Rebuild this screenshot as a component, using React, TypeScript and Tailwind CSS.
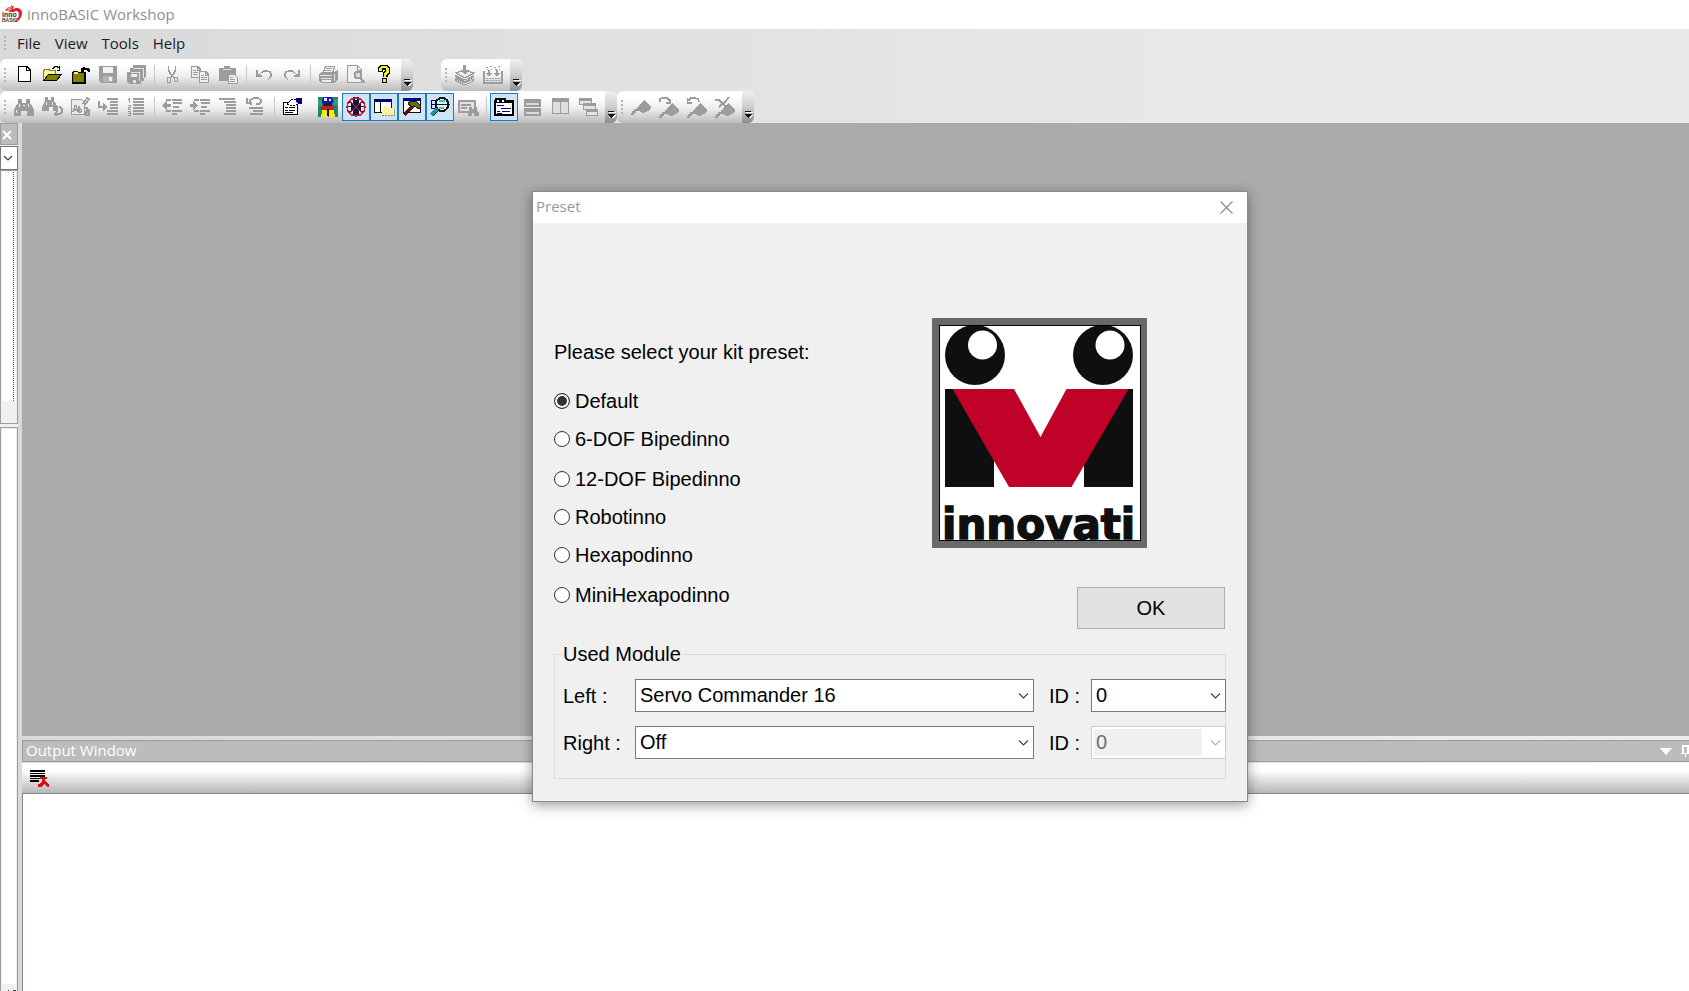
import { useState } from "react";
import type { ReactNode } from "react";

const G = "#9c9c9c";

function Icon({ children }: { children: ReactNode }) {
  return (
    <svg width="22" height="22" viewBox="0 0 22 22" fill="none" shapeRendering="crispEdges" aria-hidden="true">
      {children}
    </svg>
  );
}

const lines = (rows: [number, number, number][], color = G) =>
  rows.map(([x, y, w], i) => <rect key={i} x={x} y={y} width={w} height="2" fill={color} />);

const Flag = (
  <g fill={G}>
    <path d="M10 8l3-3 2-2v2l3 3 2 1 1 2v2l-3 2-2 1-3 1-3-1-2-2z" />
    <path d="M1 18h2v-2h2v-2h3v-2h3" stroke={G} strokeWidth="2" fill="none" />
  </g>
);

const icons: Record<string, ReactNode> = {
  new: (
    <>
      <path d="M5.500 2.500h8.500l3.500 3.500v11.500h-12z" fill="#fff" stroke="#000" />
      <path d="M13.500 2.500v4h4" stroke="#000" />
    </>
  ),
  open: (
    <>
      <path d="M2.500 17V6.500h1v-1h5v1h6v4" fill="#fbf7a0" stroke="#8a8000" />
      <path d="M2.500 16.500l5-6h13l-5 6z" fill="#808000" stroke="#000" />
      <path d="M11 4.500h1v-1h1v-1h3v1h2v2M18.500 2v4h-3" stroke="#000" />
    </>
  ),
  close: (
    <>
      <path d="M3 8h1V7h5v1h8v12H3z" fill="#000" />
      <rect x="4" y="9" width="11" height="9" fill="#808000" />
      <rect x="5" y="8" width="4" height="2" fill="#f5f080" />
      <path d="M20 8V6h-1V5h-5v1h-2M15 3v2h-2v2h2" stroke="#000" strokeWidth="1.400" />
    </>
  ),
  save: (
    <>
      <path d="M2 2h18v17H4l-2-2z" fill={G} />
      <rect x="6" y="3" width="10" height="6" fill="#f4f4f4" />
      <rect x="6" y="12" width="10" height="6" fill="#b4b4b4" />
      <rect x="12" y="13" width="3" height="4" fill="#eee" />
    </>
  ),
  saveall: (
    <>
      <path d="M8 1h13v12l-2 1v3h-3v3H4l-2-2V8h3V4h3z" fill={G} />
      <path d="M9 4.500h9v9M6 8.500h8v8" stroke="#e4e4e4" />
      <rect x="6" y="10" width="6" height="3" fill="#eee" />
      <rect x="8" y="16" width="3" height="3" fill="#e0e0e0" />
    </>
  ),
  cut: (
    <>
      <path d="M7.500 2v4l1 2 1 2 1 1 3 3M14.500 2v4l-1 2-1 2-1 1-2 3" stroke={G} strokeWidth="1.400" />
      <rect x="6.500" y="13.500" width="3" height="5" rx="1" stroke={G} strokeWidth="1.400" />
      <rect x="13.500" y="13.500" width="3" height="4" rx="1" stroke={G} strokeWidth="1.400" />
    </>
  ),
  copy: (
    <>
      <path d="M2.500 2.500h6l3 3v8h-9z" fill="#f0f0f0" stroke={G} strokeWidth="1.500" />
      <path d="M10.500 7.500h6l3 3v8h-9z" fill="#f0f0f0" stroke={G} strokeWidth="1.500" />
      <path d="M8.500 3v3h3M16.500 8v3h3M4 6.500h3M4 8.500h5M4 10.500h5M12 11.500h3M12 13.500h6M12 15.500h6" stroke={G} />
    </>
  ),
  paste: (
    <>
      <path d="M2 4h5V2h6v2h6v13H2z" fill={G} />
      <path d="M6 5.500h8" stroke="#ddd" />
      <path d="M11.500 10.500h6l3 3v6h-9z" fill="#eee" stroke={G} />
      <path d="M13 13.500h3M13 15.500h5M13 17.500h5" stroke={G} />
    </>
  ),
  undo: (
    <>
      <path d="M7 10l2-2 2-1h3l3 1 1 2v2l-1 2-2 2" stroke={G} strokeWidth="1.400" />
      <path d="M3 6h2v4h2v1h2v2H3z" fill={G} />
    </>
  ),
  redo: (
    <>
      <path d="M15 10l-2-2-2-1H8L5 8l-1 2v2l1 2 2 2" stroke={G} strokeWidth="1.400" />
      <path d="M19 6h-2v4h-2v1h-2v2h6z" fill={G} />
    </>
  ),
  print: (
    <>
      <path d="M6.500 8l2-5.500h9L16 8" fill="#f2f2f2" stroke={G} strokeWidth="1.300" />
      <path d="M9 4.500h6M8 6.500h6" stroke={G} />
      <path d="M2 10l3-2h12l4-2v9l-3 4H4l-2-2z" fill={G} />
      <path d="M3 11.500h12M4 14.500h11M17.500 10v7" stroke="#e4e4e4" />
      <rect x="5" y="16" width="9" height="2" fill="#eee" />
    </>
  ),
  preview: (
    <>
      <path d="M2.500 1.500h10l4 4v13h-14z" fill="#f0f0f0" stroke={G} strokeWidth="1.300" />
      <path d="M12.500 2v4h4" stroke={G} />
      <circle cx="13" cy="11" r="3.500" fill="#ddd" stroke={G} strokeWidth="2" />
      <path d="M15 14l5 5" stroke={G} strokeWidth="2.500" />
    </>
  ),
  help: (
    <>
      <path d="M7.500 7.500V4.500L9 3h4l1.500 1.500V8L12 10.500V13" stroke="#000" strokeWidth="5" />
      <rect x="9" y="14" width="5" height="5" fill="#000" />
      <path d="M7.500 7V4.500L9 3h4l1.500 1.500V8L12 10.500V12.500" stroke="#f6ee1c" strokeWidth="2.800" />
      <rect x="10" y="15" width="3" height="3" fill="#f6ee1c" />
    </>
  ),
  layers: (
    <>
      <path d="M2 17v-2l9 4 8-4v2l-8 4z" fill="#e6e6e6" stroke={G} strokeWidth="1.300" />
      <path d="M2 13v-1l9 4 8-4v1l-8 5z" fill="#e6e6e6" stroke={G} strokeWidth="1.300" />
      <path d="M2 9l8-3 10 3-9 5z" fill="#ececec" stroke={G} strokeWidth="1.300" />
      <path d="M9 1h3v5h3l-4 5-4-5h2z" fill={G} />
    </>
  ),
  build: (
    <>
      <path d="M2 7v12h18V7" stroke={G} strokeWidth="2" />
      <path d="M4 3.500h2M8 2.500h2M12 3.500h2M16 2.500h2M5 5.500h1M9 5.500h1M13 5.500h2M17 5.500h1" stroke={G} />
      <path d="M4 9h6l-3 4zM12 9h6l-3 4zM6 6h2v4H6zM14 6h2v4h-2z" fill={G} />
      <path d="M4 14.500h14M4 16.500h14" stroke={G} strokeDasharray="2 1" />
    </>
  ),
  find: (
    <>
      <path d="M5 3h4v4h4V3h4v4l2 3 2 4v6h-7v-5h-6v5H1v-6l2-4 2-3z" fill={G} />
      <path d="M6.500 8v3M15.500 8v3M3.500 14v3M12 9.500h-2" stroke="#ececec" />
    </>
  ),
  findnext: (
    <>
      <path d="M4 1h3v3h3V1h3v4l2 3 2 3v4h-5v-4H8v4H1v-4l2-4 1-2z" fill={G} />
      <path d="M5.500 6v3M11.500 6v3" stroke="#ececec" />
      <path d="M18 11h1l2 2v3l-2 2h-5M16 15l-2 3 2 2" stroke={G} strokeWidth="1.500" />
    </>
  ),
  replace: (
    <>
      <path d="M2.500 3.500h10l3 3v12h-13z" fill="#ececec" stroke={G} strokeWidth="1.300" />
      <path d="M4 16l2-6h1l2 6M5 14h3M10 10v6h2l1-2-1-1h-2" stroke={G} strokeWidth="1.300" />
      <path d="M14 8l4-6 2 1-4 6M15 12h3v2h3M17 16h3v3h-3z" stroke={G} strokeWidth="1.600" />
    </>
  ),
  goto: (
    <>
      {lines([[10, 2, 11], [13, 5, 8], [13, 8, 8], [13, 11, 8], [10, 14, 11], [10, 17, 11]])}
      <path d="M2 5v6h5" stroke={G} strokeWidth="1.500" />
      <path d="M6 7l5 4-5 4z" fill={G} />
    </>
  ),
  numbered: (
    <>
      {lines([[8, 2, 11], [8, 5, 11], [8, 8, 11], [8, 11, 11], [8, 14, 11], [8, 17, 11]])}
      <path d="M4.500 2v5M3 3.500h2M3 9.500h2v2h-2v2h3M3 15.500h2v4h-2M3 17.500h2" stroke={G} />
    </>
  ),
  outdent: (
    <>
      {lines([[5, 3, 5], [11, 3, 10], [12, 6, 9], [12, 10, 6], [5, 14, 5], [11, 14, 10], [11, 17, 5]])}
      <path d="M1 9.500L6 5v3h4v3H6v3z" fill={G} />
    </>
  ),
  indent: (
    <>
      {lines([[5, 3, 5], [11, 3, 10], [12, 6, 9], [12, 10, 6], [5, 14, 5], [11, 14, 10], [11, 17, 5]])}
      <path d="M9 9.500L4 5v3H1v3h3v3z" fill={G} />
    </>
  ),
  comment: (
    <>
      {lines([[2, 2, 16], [7, 5, 12], [9, 8, 10], [9, 11, 10], [9, 14, 10], [7, 17, 12]])}
    </>
  ),
  uncomment: (
    <>
      {lines([[4, 11, 14], [8, 14, 10], [5, 17, 13]])}
      <path d="M7 9L5 7V4l2-1 2-1h4l3 2v2l-2 2h-3M2 2v5h5" stroke={G} strokeWidth="1.500" />
    </>
  ),
  props: (
    <>
      <path d="M2.500 6.500h14v12h-14z" fill="#fff" stroke="#000" strokeWidth="1.600" />
      <path d="M4 11.500h3M8 11.500h6M4 14.500h3M8 14.500h6M4 16.500h8" stroke="#000" />
      <path d="M6 8l4-4 3-1h4v5l-5 2z" fill="#fff" stroke="#000" strokeDasharray="2 1" />
      <path d="M15 2h6v6h-4l-2-2z" fill="#00007c" />
    </>
  ),
  person: (
    <>
      <rect x="1" y="1" width="20" height="20" fill="#1f8468" />
      <path d="M1 4h4v6H1zM17 3h4v6h-4z" fill="#35a06c" />
      <path d="M6 1h9v2h1v4H5V3h1z" fill="#1717c8" />
      <path d="M7 2h3v3H7zM12 3h2v2h-2z" fill="#e9edff" />
      <path d="M6 7h9v3H6z" fill="#3a1420" />
      <path d="M4 10h13v4H4z" fill="#c2212b" />
      <path d="M5 14h5v5h1v2H4v-3h1zM12 14h5v4h1v3h-6z" fill="#f5ec13" />
      <rect x="10" y="13" width="2" height="7" fill="#111" />
    </>
  ),
  bug: (
    <>
      <rect x="3" y="2" width="16" height="18" fill="#e6e3ee" />
      <path d="M8 4h6v3h2v8h-2v4H8v-4H6V7h2z" fill="#16163f" />
      <path d="M3 6.500h4M15 6.500h4M3 10.500h16M3 15.500h4M15 15.500h4M9 1v4M13 1v4" stroke="#16163f" strokeWidth="1.500" />
      <circle cx="11" cy="11" r="9" stroke="#cf1d2c" strokeWidth="1.500" />
      <path d="M5 5l12 12M17 5L5 17" stroke="#cf1d2c" strokeWidth="1.200" />
    </>
  ),
  winfolder: (
    <>
      <path d="M1.500 3.500h17v13h-17z" fill="#fff" stroke="#111" />
      <rect x="2" y="3" width="17" height="3" fill="#00007c" />
      <path d="M7.500 6v10" stroke="#111" />
      <path d="M9 19v-7h2v-2h4v2h6v7z" fill="#f7f3a6" />
      <path d="M9 19.500h12.500v-7" stroke="#8f8c45" strokeDasharray="2 1" />
    </>
  ),
  hammer: (
    <>
      <path d="M2.500 2.500h17v14h-17z" fill="#fff" stroke="#111" strokeWidth="1.500" />
      <rect x="2" y="2" width="18" height="3" fill="#00007c" />
      <path d="M3 19l9-9" stroke="#5c130c" strokeWidth="3.500" />
      <path d="M7 8l2-3h6l5 5-2 3-4-3-3 1z" fill="#6c6c00" stroke="#222" />
    </>
  ),
  magnify: (
    <>
      <path d="M2.500 4v9M2 4.500h5M2 8.500h4M2 12.500h5" stroke="#00007c" strokeWidth="1.500" />
      <circle cx="13" cy="8.500" r="6.500" fill="#e2f7fb" stroke="#111" strokeWidth="2" />
      <path d="M10 4h6v2h-6zM10 11h5v2h-5z" fill="#2bc4d2" />
      <path d="M7 8.500h14" stroke="#111" />
      <path d="M8 13l-6 6" stroke="#149aa8" strokeWidth="3" />
      <path d="M9 15l-5 5" stroke="#111" strokeWidth="1.300" />
    </>
  ),
  findwin: (
    <>
      <path d="M1.500 4.500h16v11h-16z" fill="#e2e2e2" stroke={G} strokeWidth="2" />
      <path d="M1 5h17M4 9h10M4 12h6" stroke={G} strokeWidth="2" />
      <path d="M12 11h3v2h2v-2h3v3l2 3v3h-5v-3h-2v3h-4v-3l1-3z" fill={G} />
    </>
  ),
  tabs: (
    <>
      <path d="M2 5h1V3h4v2h1V3h4v2h8v14H2z" fill="#fff" stroke="#000" strokeWidth="1.600" />
      <path d="M1 6.500h20" stroke="#000" strokeWidth="1.500" />
      <path d="M4 9.500h7M8 12.500h10M4 15.500h3M9 15.500h8M4 17.500h5" stroke="#00007c" />
    </>
  ),
  horiz: (
    <>
      <path d="M3.500 3.500h15v6h-15zM3.500 12.500h15v6h-15z" fill="#d9d9d9" stroke={G} strokeWidth="2" />
      <path d="M3 4.500h16M3 13.500h16" stroke={G} strokeWidth="4" />
    </>
  ),
  vert: (
    <>
      <path d="M3.500 3.500h8v14h-8zM11.500 3.500h8v14h-8z" fill="#dedede" stroke={G} strokeWidth="1.600" />
      <path d="M3 4h17" stroke={G} strokeWidth="4" />
    </>
  ),
  cascade: (
    <>
      <path d="M2.500 2.500h12v6h-12z" fill="#e4e4e4" stroke={G} strokeWidth="1.500" />
      <path d="M2 3.500h13" stroke={G} strokeWidth="3" />
      <path d="M6.500 7.500h12v6h-12z" fill="#e4e4e4" stroke={G} strokeWidth="1.500" />
      <path d="M6 8.500h13" stroke={G} strokeWidth="3" />
      <path d="M9.500 13.500h11v6h-11z" fill="#e4e4e4" stroke={G} strokeWidth="1.500" />
      <path d="M9 14.500h12" stroke={G} strokeWidth="3" />
    </>
  ),
  flag: Flag,
  flagnext: (
    <>
      <g transform="translate(0 3)">{Flag}</g>
      <path d="M2 6V3l2-1h5l2 2 1 3M12.500 3v4H8" stroke={G} strokeWidth="1.500" />
    </>
  ),
  flagprev: (
    <>
      <g transform="translate(0 3)">{Flag}</g>
      <path d="M13 6l-1-3-3-1H5L2 5M1.500 2v5H6" stroke={G} strokeWidth="1.500" />
    </>
  ),
  flagclear: (
    <>
      <g transform="translate(0 3)">{Flag}</g>
      <path d="M1 4h4l3 3 4 4M15 1l-4 5-6 5" stroke={G} strokeWidth="2" />
    </>
  ),
};

type Item = { icon?: string; label?: string; on?: boolean; gap?: "line" | "blank" };
const b = (icon: string, label: string, on = false): Item => ({ icon, label, on });
const line: Item = { gap: "line" };
const blank: Item = { gap: "blank" };

const standard: Item[] = [
  b("new", "New"), b("open", "Open"), b("close", "Close"), b("save", "Save"), b("saveall", "Save All"), line,
  b("cut", "Cut"), b("copy", "Copy"), b("paste", "Paste"), line,
  b("undo", "Undo"), b("redo", "Redo"), line,
  b("print", "Print"), b("preview", "Print Preview"), b("help", "Help Topics"),
];
const buildItems: Item[] = [b("layers", "Compile"), b("build", "Build")];
const editing: Item[] = [
  b("find", "Find"), b("findnext", "Find Next"), b("replace", "Replace"), b("goto", "Go To"), b("numbered", "Line Numbers"), line,
  b("outdent", "Outdent"), b("indent", "Indent"), b("comment", "Comment"), b("uncomment", "Uncomment"), line,
  b("props", "Properties"), blank,
  b("person", "Module"), b("bug", "Debug", true), b("winfolder", "Workspace", true), b("hammer", "Output", true),
  b("magnify", "Find Results", true), b("findwin", "Find Window"), line,
  b("tabs", "Tabbed", true), b("horiz", "Tile Horizontally"), b("vert", "Tile Vertically"), b("cascade", "Cascade"),
];
const bookmarks: Item[] = [
  b("flag", "Toggle Bookmark"), b("flagnext", "Next Bookmark"), b("flagprev", "Previous Bookmark"), b("flagclear", "Clear Bookmarks"),
];

function Grip() {
  return (
    <span className="flex w-2.5 shrink-0 flex-col items-center gap-0.5">
      {[0, 1, 2, 3].map((i) => (
        <span key={i} className="size-0.5 bg-[#b4b4b4]" />
      ))}
    </span>
  );
}

function Toolbar({ items, name }: { items: Item[]; name: string }) {
  return (
    <div role="toolbar" aria-label={name} className="flex h-8 shrink-0 items-stretch overflow-hidden rounded-md bg-linear-to-b from-white from-20% via-[#ededed] via-55% to-[#bcbcbc]">
      <div className="flex items-center pr-[3px]">
        <Grip />
        {items.map((it, i) =>
          it.gap ? (
            <span key={i} className="flex h-5 w-2 justify-center">
              {it.gap === "line" && <span className="w-px bg-[#c6c6c6]" />}
            </span>
          ) : (
            <button
              key={i}
              type="button"
              aria-label={it.label}
              className={it.on ? "grid size-7 place-items-center border border-[#1979ca] bg-[#cfe4f5]" : "grid size-7 place-items-center"}
            >
              <Icon>{icons[it.icon!]}</Icon>
            </button>
          ),
        )}
      </div>
      <button type="button" aria-label={`${name} options`} className="flex w-3 items-end justify-center bg-linear-to-b from-[#f0f0f0] via-[#cfcfcf] to-[#8c8c8c] pb-1">
        <svg width="9" height="9" viewBox="0 0 9 9" shapeRendering="crispEdges" aria-hidden="true">
          <path d="M2 2h7v1H2zM3 5h6L6 9z" fill="#fff" />
          <path d="M1 1h6v1H1zM1 4h7L4.500 8z" fill="#111" />
        </svg>
      </button>
    </div>
  );
}

function AppLogo() {
  return (
    <svg width="21" height="20" viewBox="0 0 21 20" aria-hidden="true">
      <path d="M3 7c1-4 6-5 8-2 4-2 9-1 9 4 0 4-3 8-6 9h-2l2-2c3-1 4-8 1-9-3 0-4 2-5 2S5 5 3 7z" fill="#e0232b" />
      <path d="M10 5L9 1l3 2z" fill="#c4141c" />
      <path d="M5 4c2-1 4 0 5 2l-4 1z" fill="#f58a8a" />
      <rect x="0" y="8" width="13" height="11" fill="#f4f4f4" />
      <text x="0" y="13" fontSize="7" fontWeight="700" fontFamily="Liberation Sans, sans-serif" fill="#333">inno</text>
      <text x="0" y="18" fontSize="5" fontWeight="700" fontFamily="Liberation Sans, sans-serif" fill="#444">BASIC</text>
    </svg>
  );
}

function InnovatiLogo() {
  return (
    <svg width="215" height="230" viewBox="0 0 215 230" role="img" aria-label="innovati">
      <rect width="215" height="230" fill="#696969" />
      <rect x="7.500" y="7.500" width="201" height="215" fill="#fff" stroke="#000" />
      <clipPath id="frame"><rect x="8" y="8" width="200" height="214" /></clipPath>
      <g clipPath="url(#frame)">
        <circle cx="43" cy="37" r="30" fill="#0f0f0f" />
        <circle cx="171" cy="37" r="30" fill="#0f0f0f" />
        <circle cx="50.500" cy="27" r="14.500" fill="#fff" />
        <circle cx="178" cy="27" r="14.500" fill="#fff" />
        <path d="M13 71h49v98H13zM152 71h49v98h-49z" fill="#0f0f0f" />
        <path d="M62 142v27h15zM152 147v22h-12z" fill="#fff" />
        <path d="M20.500 71h61.500l26.500 48L134.500 71H196.500L139.500 169H77z" fill="#c00228" />
        <text x="10" y="221" fontSize="42" fontWeight="700" fontFamily="DejaVu Sans, sans-serif" fill="#0f0f0f" stroke="#0f0f0f" strokeWidth="1.500">innovati</text>
      </g>
    </svg>
  );
}

function Chevron({ faded = false }: { faded?: boolean }) {
  return (
    <svg className="pointer-events-none absolute top-3 right-1" width="11" height="8" viewBox="0 0 11 8" fill="none" aria-hidden="true">
      <path d="M1 1.500l4.500 4.500L10 1.500" stroke={faded ? "#b0b0b0" : "#404040"} strokeWidth="1.100" />
    </svg>
  );
}

const presets = [
  { name: "Default", space: "" },
  { name: "6-DOF Bipedinno", space: "mt-3.5" },
  { name: "12-DOF Bipedinno", space: "mt-4" },
  { name: "Robotinno", space: "mt-3.5" },
  { name: "Hexapodinno", space: "mt-3.5" },
  { name: "MiniHexapodinno", space: "mt-4" },
];

function ModuleRow({ side, value, disabled }: { side: string; value: string; disabled?: boolean }) {
  return (
    <div className="flex items-center">
      <label htmlFor={`${side}-module`} className="w-[72px]">{side} :</label>
      <span className="relative h-[33px] flex-1 border border-[#7a7a7a] bg-white">
        <select id={`${side}-module`} defaultValue={value} className="h-full w-full appearance-none bg-transparent px-1 pb-0.5 outline-none">
          <option>Servo Commander 16</option>
          <option>Off</option>
        </select>
        <Chevron />
      </span>
      <label htmlFor={`${side}-id`} className="w-[57px] pl-[15px]">ID :</label>
      {disabled ? (
        <span className="relative flex h-[33px] w-[135px] border border-[#cccccc] bg-white p-0.5">
          <select id={`${side}-id`} disabled defaultValue="0" className="h-full w-[108px] appearance-none bg-[#f0f0f0] px-0.5 pb-0.5 text-[#6d6d6d] opacity-100">
            <option>0</option>
          </select>
          <Chevron faded />
        </span>
      ) : (
        <span className="relative h-[33px] w-[135px] border border-[#7a7a7a] bg-white">
          <select id={`${side}-id`} defaultValue="0" className="h-full w-full appearance-none bg-transparent px-1 pb-0.5 outline-none">
            <option>0</option>
            <option>1</option>
          </select>
          <Chevron />
        </span>
      )}
    </div>
  );
}

function PresetDialog() {
  const [preset, setPreset] = useState("Default");
  return (
    <section role="dialog" aria-label="Preset" className="absolute top-[191px] left-[532px] w-[716px] border border-[#8a8a8a] bg-[#f0f0f0] shadow-[0_3px_12px_rgba(0,0,0,0.4)]">
      <header className="flex h-[31px] items-center justify-between bg-white pr-3.5 pb-[3px] pl-[3px]">
        <h2 className="font-[Open_Sans,sans-serif] text-[15px] leading-5 text-[#999999]">Preset</h2>
        <button type="button" aria-label="Close" className="pt-0.5">
          <svg width="13" height="13" viewBox="0 0 13 13" aria-hidden="true">
            <path d="M0.500 0.500l12 12M12.500 0.500l-12 12" stroke="#8c8c8c" strokeWidth="1.200" />
          </svg>
        </button>
      </header>
      <form className="px-[21px] pb-[22px] font-[Liberation_Sans,Arial,sans-serif] text-[20px] leading-6 text-black">
        <div className="flex justify-between pt-[95px]">
          <div role="radiogroup" aria-labelledby="preset-title" className="flex flex-col pt-[22px]">
            <p id="preset-title" className="mb-[25px]">Please select your kit preset:</p>
            {presets.map(({ name, space }) => (
              <label key={name} className={`flex items-center gap-[5px] ${space}`}>
                <input
                  type="radio"
                  name="preset"
                  checked={preset === name}
                  onChange={() => setPreset(name)}
                  className="size-4 appearance-none rounded-full border border-[#333333] bg-white checked:bg-[#333333] checked:shadow-[inset_0_0_0_2px_white]"
                />
                {name}
              </label>
            ))}
          </div>
          <div className="flex w-[294px] flex-col pr-px">
            <InnovatiLogo />
            <button type="button" className="mt-[39px] h-[42px] w-[148px] self-end border border-[#adadad] bg-[#e1e1e1]">OK</button>
          </div>
        </div>
        <fieldset className="mt-[13px] border border-[#dcdcdc] pb-[19px] pl-[7px]">
          <legend className="px-px">Used Module</legend>
          <div className="-mr-px flex flex-col gap-3.5 pt-[13px] pl-px">
            <ModuleRow side="Left" value="Servo Commander 16" />
            <ModuleRow side="Right" value="Off" disabled />
          </div>
        </fieldset>
      </form>
    </section>
  );
}

function SidePanel() {
  return (
    <aside className="flex w-[18px] shrink-0 flex-col bg-[#f0f0f0]">
      <div className="flex h-[22px] items-center border border-[#9c9c9c] bg-[#bcbcbc] pt-px pl-px">
        <button type="button" aria-label="Close panel">
          <svg width="10" height="10" viewBox="0 0 10 10" aria-hidden="true">
            <path d="M1 1l8 8M9 1L1 9" stroke="#fff" strokeWidth="2" />
          </svg>
        </button>
      </div>
      <button type="button" aria-label="Choose view" className="mt-px flex h-6 items-center border border-[#777777] bg-white pl-0.5">
        <svg width="10" height="7" viewBox="0 0 10 7" fill="none" aria-hidden="true">
          <path d="M1 1l4 4 4-4" stroke="#404040" strokeWidth="1.200" />
        </svg>
      </button>
      <div className="h-[254px] border border-[#9c9c9c] px-px pt-px">
        <div className="flex h-[229px] justify-end bg-white pr-0.5">
          <span className="w-px bg-[repeating-linear-gradient(to_bottom,#555_0_1px,#fff_1px_2px)]" />
        </div>
      </div>
      <div className="mt-[3px] flex flex-1 flex-col border border-b-0 border-[#9c9c9c] px-px pt-px">
        <div className="flex-1 bg-white" />
        <div className="flex h-[7px] items-end justify-end gap-1">
          <span className="h-px w-px bg-[#444444]" />
          <span className="h-px w-[3px] bg-[#444444]" />
        </div>
      </div>
    </aside>
  );
}

export default function App() {
  return (
    <div className="relative flex h-screen flex-col overflow-hidden bg-[#dadada] font-[Open_Sans,sans-serif]">
      <header className="flex h-[29px] shrink-0 items-center gap-1 bg-white pb-0.5 pl-0.5">
        <AppLogo />
        <h1 className="text-[15px] leading-5 text-[#8f8f8f]">innoBASIC Workshop</h1>
      </header>
      <div className="shrink-0 bg-linear-to-r from-[#d9d9d9] to-[#e8e8e8] to-70%">
        <nav aria-label="Main menu" className="flex h-[30px] items-center pb-[3px] text-[15px] leading-5 text-[#1c1c1c]">
          <Grip />
          <div className="flex gap-3.5 pl-[7px]">
            {["File", "View", "Tools", "Help"].map((m) => (
              <button key={m} type="button">{m}</button>
            ))}
          </div>
        </nav>
        <div className="flex gap-7">
          <Toolbar name="Standard" items={standard} />
          <Toolbar name="Build" items={buildItems} />
        </div>
        <div className="flex">
          <Toolbar name="Editing" items={editing} />
          <Toolbar name="Bookmarks" items={bookmarks} />
        </div>
      </div>
      <main className="flex min-h-0 flex-1">
        <SidePanel />
        <div className="flex min-w-0 flex-1 flex-col pl-1">
          <div className="flex-1 bg-[#ababab]" />
          <section aria-label="Output Window" className="flex h-[255px] flex-col bg-linear-to-r from-[#dadada] to-[#eeeeee] pt-1">
            <header className="flex h-[22px] items-center justify-between overflow-hidden border border-r-0 border-[#9c9c9c] bg-[#bcbcbc] pl-[3px] text-white">
              <h2 className="pb-0.5 text-[15px] leading-5">Output Window</h2>
              <div className="flex items-center gap-[9px]">
                <button type="button" aria-label="Window position">
                  <svg width="12" height="7" viewBox="0 0 12 7" aria-hidden="true"><path d="M0 0h12L6 7z" fill="#fff" /></svg>
                </button>
                <button type="button" aria-label="Auto hide" className="w-2 overflow-hidden">
                  <svg width="10" height="12" viewBox="0 0 10 12" fill="none" shapeRendering="crispEdges" aria-hidden="true">
                    <path d="M2 8V1h5v7M0 8.500h10M4.500 8v4" stroke="#fff" strokeWidth="1.600" />
                  </svg>
                </button>
              </div>
            </header>
            <div className="mt-px flex h-[30px] items-center bg-linear-to-b from-white from-25% to-[#b8b8b8] pt-px pl-2">
              <button type="button" aria-label="Clear output">
                <svg width="19" height="18" viewBox="0 0 19 18" shapeRendering="crispEdges" aria-hidden="true">
                  <path d="M0 0h15v2H0zM0 3h15v1H0zM0 5h15v2H0zM0 8h10v1H0zM0 10h9v2H0z" fill="#000" />
                  <path d="M10 7h7v2h-2v2l2 2 2 2v2h-2l-3-3-3 3H8v-3h2l2-3v-2h-2z" fill="#dc1010" />
                </svg>
              </button>
            </div>
            <div role="log" className="flex-1 border-t border-l border-[#82858c] bg-white" />
          </section>
        </div>
      </main>
      <PresetDialog />
    </div>
  );
}
